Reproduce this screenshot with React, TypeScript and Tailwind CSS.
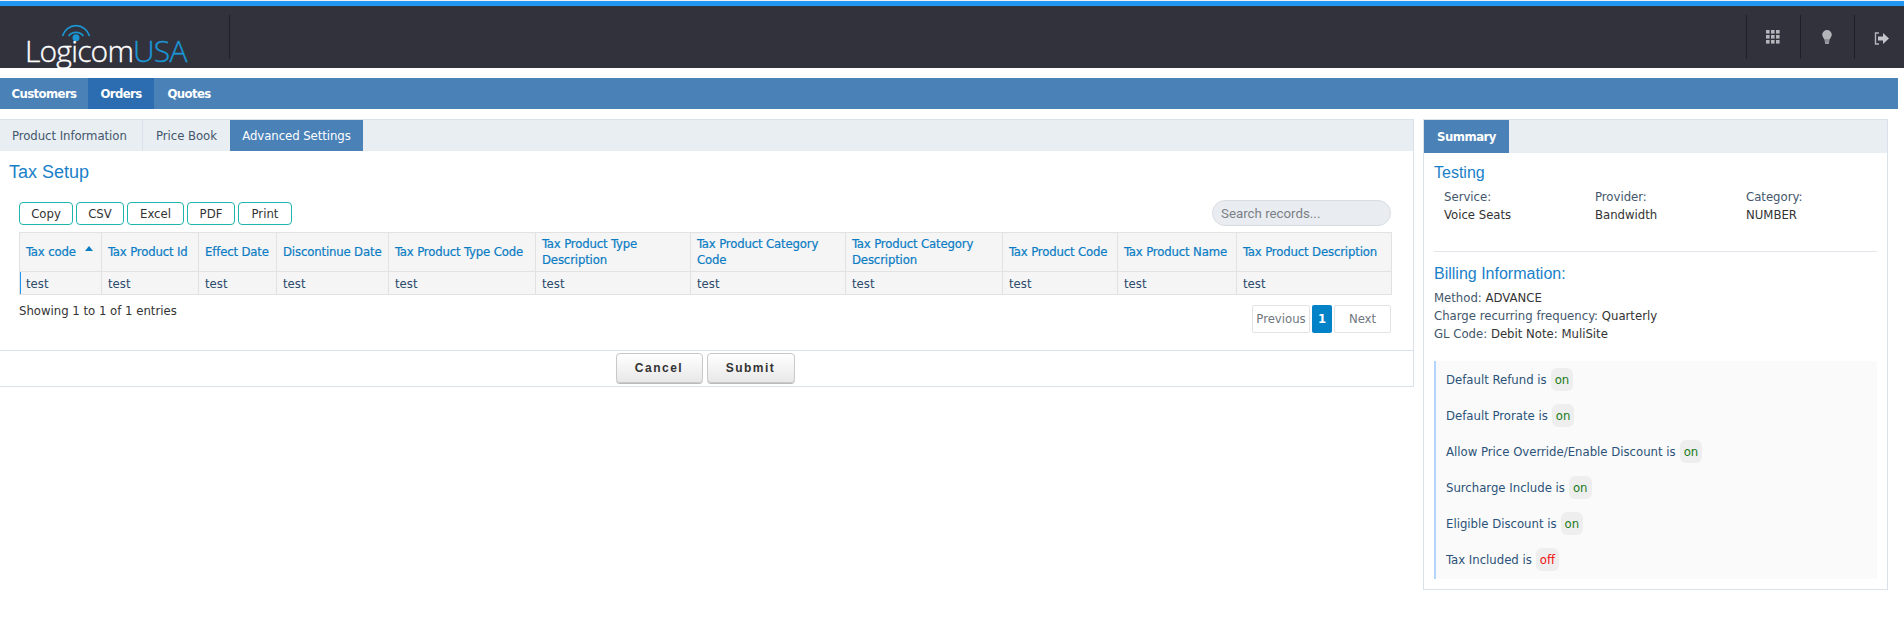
import React from "react";

const cols = [
  ["w-[82px]", "Tax code"],
  ["w-[97px]", "Tax Product Id"],
  ["w-[78px]", "Effect Date"],
  ["w-[112px]", "Discontinue Date"],
  ["w-[147px]", "Tax Product Type Code"],
  ["w-[155px]", "Tax Product Type Description"],
  ["w-[155px]", "Tax Product Category Code"],
  ["w-[157px]", "Tax Product Category Description"],
  ["w-[115px]", "Tax Product Code"],
  ["w-[119px]", "Tax Product Name"],
  ["w-[155px]", "Tax Product Description"],
];

const flags: [string, string][] = [
  ["Default Refund is", "on"],
  ["Default Prorate is", "on"],
  ["Allow Price Override/Enable Discount is", "on"],
  ["Surcharge Include is", "on"],
  ["Eligible Discount is", "on"],
  ["Tax Included is", "off"],
];

const sep = "w-px h-[44px] bg-[#1f2027]";

function Logo() {
  return (
    <div className="relative w-[229px] h-[62px] shrink-0">
      <svg className="absolute left-[60px] top-[13px]" width="32" height="26" viewBox="0 0 32 26" fill="none">
        <circle cx="16" cy="18.7" r="3.5" fill="#1b95d3" />
        <path d="M8.5 17 A9.5 9.5 0 0 1 23.5 17" stroke="#1b95d3" strokeWidth="1.7" />
        <path d="M2.5 17 A14 14 0 0 1 29.5 17" stroke="#1b95d3" strokeWidth="1.7" />
      </svg>
      <div className="absolute left-[25px] top-[27px] text-[30px] leading-[36px] tracking-[-0.8px] font-light text-white whitespace-nowrap [font-stretch:normal] [-webkit-text-stroke:0.35px] font-['Open_Sans',sans-serif]">
        Logicom<span className="text-[#1b95d3]">USA</span>
      </div>
    </div>
  );
}

export default function App() {
  return (
    <div className="min-h-[628px] bg-white font-['DejaVu_Sans_Condensed','DejaVu_Sans',sans-serif] [font-stretch:condensed] text-[13px] text-[#2c3e50]">
      <div className="pt-px bg-[#eef2f6]">
        <div className="h-[5px] bg-[#2196f3]" />
      </div>
      <header className="h-[62px] bg-[#31323c] flex items-center pr-[15px]">
        <Logo />
        <div className={sep} />
        <div className="ml-auto flex items-center">
          <div className={sep} />
          <div className="w-[53px] flex justify-center pr-px">
            <svg width="14" height="14" viewBox="0 0 14 14" fill="#b4b5bb">
              <rect x="0" y="0" width="3.6" height="3.6" /><rect x="5" y="0" width="3.6" height="3.6" /><rect x="10" y="0" width="3.6" height="3.6" />
              <rect x="0" y="5" width="3.6" height="3.6" /><rect x="5" y="5" width="3.6" height="3.6" /><rect x="10" y="5" width="3.6" height="3.6" />
              <rect x="0" y="10" width="3.6" height="3.6" /><rect x="5" y="10" width="3.6" height="3.6" /><rect x="10" y="10" width="3.6" height="3.6" />
            </svg>
          </div>
          <div className={sep} />
          <div className="w-[53px] flex justify-center pr-px">
            <svg width="10" height="14" viewBox="0 0 10 14" fill="#b4b5bb">
              <path d="M5 0a4.8 4.8 0 0 0-4.8 4.8c0 2 1.6 3 2.2 5h5.2c.6-2 2.2-3 2.2-5A4.8 4.8 0 0 0 5 0z" />
              <rect x="2.6" y="10.3" width="4.8" height="1.4" /><rect x="3" y="12.2" width="4" height="1.6" />
            </svg>
          </div>
          <div className={sep} />
          <div className="w-[34px] flex justify-end pt-[3px]">
            <svg width="15" height="13" viewBox="0 0 15 13" fill="none">
              <path d="M5 1H1.5v11H5" stroke="#b4b5bb" strokeWidth="1.4" />
              <path d="M4 4.5h5V1l6 5.5-6 5.5V8.5H4z" fill="#c4c5ca" />
            </svg>
          </div>
        </div>
      </header>

      <nav className="mt-[10px] w-[1898px] h-[31px] bg-[#4a82b8] flex text-white font-bold text-[13px] tracking-[-0.6px] leading-[31px]">
        <a className="w-[88px] text-center">Customers</a>
        <a className="w-[66px] text-center bg-[#2b6db0]">Orders</a>
        <a className="w-[70px] text-center">Quotes</a>
      </nav>

      <main className="mt-[10px] flex items-start w-[1888px]">
        <section className="w-[1414px] h-[268px] shrink-0 border-t border-r border-b border-[#d9e2ea] flex flex-col">
          <div className="h-[31px] bg-[#e9eef3] flex text-[13px] tracking-[-0.05px] leading-[31px] text-[#43566b]">
            <div className="w-[143px] pl-3 border-r border-[#d9e2ea]">Product Information</div>
            <div className="w-[87px] text-center">Price Book</div>
            <div className="w-[133px] text-center bg-[#4a82b8] text-white">Advanced Settings</div>
          </div>
          <h2 className="mt-[10px] ml-[9px] text-[18px] leading-[22px] text-[#1a7fc9] font-['Liberation_Sans',sans-serif]">Tax Setup</h2>
          <div className="mt-[10px] flex items-start justify-between pl-[19px] pr-[22px]">
            <div className="flex gap-[3px] mt-[9px] text-[#333]">
              {[["w-[54px]", "Copy"], ["w-[48px]", "CSV"], ["w-[57px]", "Excel"], ["w-[48px]", "PDF"], ["w-[54px]", "Print"]].map(([w, t]) => (
                <button key={t} className={`${w} h-[23px] border border-[#1fb5ad] rounded-[4px] bg-white text-[13px] leading-[20px]`}>{t}</button>
              ))}
            </div>
            <input
              placeholder="Search records..."
              className="w-[179px] h-[26px] mt-[7px] rounded-full border border-[#d8dde3] bg-[#e9edf2] px-2 text-[13.3px] font-['Roboto',sans-serif] [font-stretch:normal] outline-none placeholder:text-[#7b7f85]"
            />
          </div>
          <div className="mt-[6px] ml-[19px] w-[1373px]">
            <table className="table-fixed w-full border-collapse bg-[#f5f5f5] text-[13px]">
              <thead>
                <tr className="h-[39px]">
                  {cols.map(([w, t], i) => (
                    <th key={t} className={`${w} relative border border-[#e2e2e2] pl-[6px] pr-0 text-left font-normal leading-4 tracking-[-0.15px] [-webkit-text-stroke:0.2px] text-[#0a7cc4] align-middle ${t.length > 23 ? "" : "whitespace-nowrap"}`}>
                      {t}
                      {i === 0 && <span className="absolute right-[8px] top-[13px] w-0 h-0 border-x-[4px] border-x-transparent border-b-[5px] border-b-[#0a7cc4]" />}
                    </th>
                  ))}
                </tr>
              </thead>
              <tbody>
                <tr className="h-[23px]">
                  {cols.map(([w, t], i) => (
                    <td key={t} className={`border border-[#e2e2e2] pl-[6px] pr-[7px] pt-px text-[#2b4a6b] ${i === 0 ? "shadow-[inset_1px_0_0_#2196f3,-1px_0_0_#2196f3]" : ""}`}>test</td>
                  ))}
                </tr>
              </tbody>
            </table>
          </div>
          <div className="flex justify-between items-start pl-[19px] pr-[22px] mt-[8px] flex-1">
            <div className="leading-[16px] text-[#333]">Showing 1 to 1 of 1 entries</div>
            <div className="flex gap-[2px] mt-[2px] text-[13px] text-[#6f7780]">
              <div className="w-[58px] h-[28px] border border-[#e3e3e3] rounded-[2px] flex items-center justify-center">Previous</div>
              <div className="w-[20px] h-[28px] bg-[#0482c8] rounded-[2px] text-white font-bold flex items-center justify-center">1</div>
              <div className="w-[57px] h-[28px] border border-[#e3e3e3] rounded-[2px] flex items-center justify-center">Next</div>
            </div>
          </div>
          <div className="h-[36px] border-t border-[#d9e2ea] flex justify-center gap-[4px] pt-[2px] pr-[3px] font-['Liberation_Sans',sans-serif] font-bold text-[12px] tracking-[1.5px] text-[#333]">
            <button className="w-[87px] h-[30px] rounded-[4px] border border-[#c8c8c8] bg-gradient-to-b from-white to-[#e8e8e8] shadow-[0_1px_0_#bbb]">Cancel</button>
            <button className="w-[88px] h-[30px] rounded-[4px] border border-[#c8c8c8] bg-gradient-to-b from-white to-[#e8e8e8] shadow-[0_1px_0_#bbb]">Submit</button>
          </div>
        </section>

        <aside className="ml-[9px] w-[465px] h-[471px] border border-[#d9e2ea] flex flex-col">
          <div className="h-[33px] bg-[#e9eef3] flex">
            <div className="w-[85px] h-[33px] bg-[#4a82b8] text-white font-bold text-[13px] tracking-[-0.5px] leading-[33px] text-center">Summary</div>
          </div>
          <div className="px-[10px]">
            <h3 className="mt-[9px] text-[16px] leading-[22px] text-[#1a7fc9] font-['Liberation_Sans',sans-serif]">Testing</h3>
            <div className="mt-[4px] pl-[10px] grid grid-cols-3 w-[463px] leading-[18px]">
              <div><div className="text-[#43566b]">Service:</div><div className="text-[#333]">Voice Seats</div></div>
              <div><div className="text-[#43566b]">Provider:</div><div className="text-[#333]">Bandwidth</div></div>
              <div><div className="text-[#43566b]">Category:</div><div className="text-[#333]">NUMBER</div></div>
            </div>
            <div className="mt-[27px] border-t border-[#e2e6ea]" />
            <h3 className="mt-[11px] text-[16px] leading-[22px] text-[#1a7fc9] font-['Liberation_Sans',sans-serif]">Billing Information:</h3>
            <div className="mt-[4px] leading-[18px] text-[#43566b]">
              <div>Method: <span className="text-[#333]">ADVANCE</span></div>
              <div>Charge recurring frequency: <span className="text-[#333]">Quarterly</span></div>
              <div>GL Code: <span className="text-[#333]">Debit Note: MuliSite</span></div>
            </div>
            <div className="mt-[18px] border-l-2 border-[#b3d4fc] bg-[#fafafa] pl-[10px] h-[218px] pt-[7px] text-[#2b5278]">
              {flags.map(([t, v]) => (
                <div key={t} className="h-[36px] flex items-start">
                  <span className="leading-[23px]">{t}</span>
                  <span className={`ml-1 h-[23px] leading-[23px] px-1 rounded-[6px] bg-[#eeeeee] ${v === "on" ? "text-[#1a7a1a]" : "text-[#f01010]"}`}>{v}</span>
                </div>
              ))}
            </div>
          </div>
        </aside>
      </main>
    </div>
  );
}
